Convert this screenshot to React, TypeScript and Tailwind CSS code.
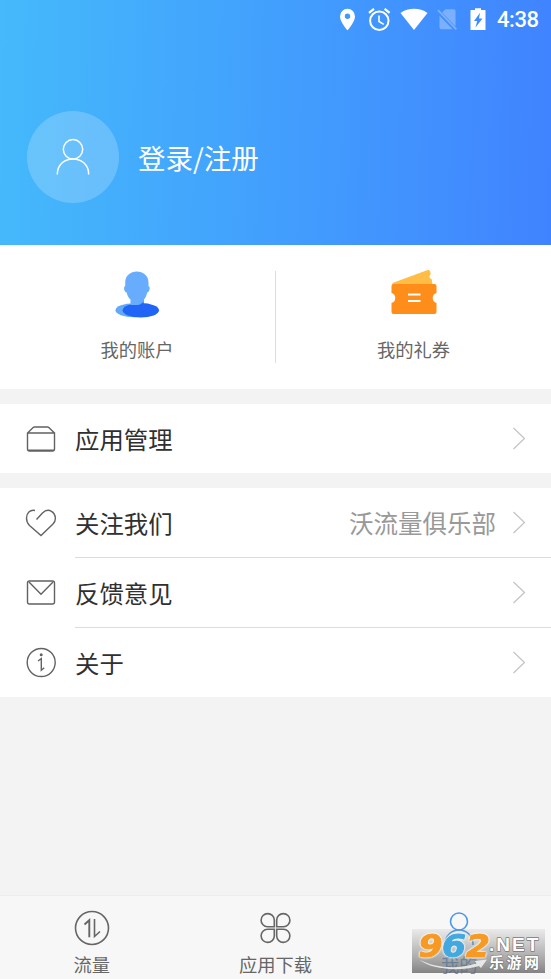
import type { ReactNode } from "react";

function StatusBar() {
  return (
    <div className="flex h-10 items-center pl-[339px] text-white">
      <svg width="17" height="24" viewBox="0 0 17 24" fill="currentColor">
        <path fillRule="evenodd" d="M8.5 .8a7.500 7.500 0 0 0-7.500 7.600C1 14 8.500 22.300 8.500 22.300S16 14 16 8.400A7.500 7.500 0 0 0 8.500.8zm0 4.800a2.700 2.700 0 1 1 0 5.400 2.700 2.700 0 0 1 0-5.400z" />
      </svg>
      <svg className="ml-3" width="23" height="24" viewBox="0 0 23 24" fill="none" stroke="currentColor" strokeWidth="2">
        <circle cx="11.300" cy="12.700" r="9.200" />
        <path d="M11 7.500v6l4.800 2.900" strokeWidth="1.600" />
        <path d="M1 4.900 6 .8M16.600.8l5 4.100" strokeWidth="2.200" />
      </svg>
      <svg className="ml-[9px]" width="28" height="24" viewBox="0 0 28 24" fill="currentColor">
        <path d="M14 22 .5 5C4.500 2.200 9 .8 14 .8s9.500 1.400 13.500 4.200z" />
      </svg>
      <svg className="ml-[9px] opacity-30" width="21" height="24" viewBox="0 0 21 24" fill="currentColor">
        <path d="M8.500 1.300h8.300q1.700 0 1.700 1.700v15.400L5.200 4.600zM2.500 7.800 15.700 21.300H4.200q-1.700 0-1.700-1.700z" />
        <path d="M.3 2.800 1.700 1.500 20 20.800l-1.300 1.300z" />
      </svg>
      <svg className="ml-3" width="16" height="24" viewBox="0 0 16 24" fill="currentColor">
        <path fillRule="evenodd" d="M5 .3h6v1.800h4q.5 0 .5.500V22H.5V2.600q0-.5.500-.5h4zm5 4.500L4 13h3.200l-1.700 6.500 7-9H9z" />
      </svg>
      <span className="ml-[11px] font-['Roboto',sans-serif] text-[22px] leading-none font-medium tracking-[-0.4px]">4:38</span>
    </div>
  );
}

function Chevron() {
  return (
    <svg className="mr-[25px] shrink-0" width="14" height="24" viewBox="0 0 14 24" fill="none" stroke="#c3c3c3" strokeWidth="1.200">
      <path d="m1.500 1 11 10.500-11 10.500" />
    </svg>
  );
}

function Row({ icon, label, note }: { icon: ReactNode; label: string; note?: string }) {
  return (
    <div className="flex h-[69px] items-center bg-white">
      <svg className="ml-[25px] shrink-0" width="32" height="32" viewBox="0 0 32 32" fill="none" stroke="#626262" strokeWidth="1.400">
        {icon}
      </svg>
      <span className="mt-[2px] ml-[18px] text-[24.400px] leading-none text-[#303030]">{label}</span>
      <span className="mt-[2px] mr-4 ml-auto text-[24.500px] leading-none text-[#999]">{note}</span>
      <Chevron />
    </div>
  );
}

function Tab({ icon, label, active = false }: { icon: ReactNode; label: string; active?: boolean }) {
  return (
    <div className={active ? "flex flex-1 flex-col items-center text-[#4c99e8]" : "flex flex-1 flex-col items-center text-[#666]"}>
      <svg className="mt-[14px]" width="36" height="36" viewBox="0 0 36 36" fill="none" stroke="currentColor" strokeWidth="1.600">
        {icon}
      </svg>
      <span className="mt-[9px] text-[18.300px] leading-none">{label}</span>
    </div>
  );
}

function Watermark() {
  return (
    <svg className="absolute top-[929px] left-[412px]" width="134" height="44" viewBox="0 0 134 44">
      <defs>
        <linearGradient id="plate" x1="0" y1="0" x2="0" y2="1">
          <stop offset="0" stopColor="#8b8b8b" stopOpacity="0.120" />
          <stop offset="0.400" stopColor="#858585" stopOpacity="0.450" />
          <stop offset="1" stopColor="#6a6a6a" stopOpacity="0.820" />
        </linearGradient>
      </defs>
      <rect width="133" height="44" fill="url(#plate)" />
      <path d="M7 30.500c16 8.500 38 10 57.500 4l-2-2.500 12.500-1.500L69 39l-2-2C46 43 20 40.500 7 30.500z" fill="#f5f5f5" fillOpacity="0.850" />
      <g className="[filter:drop-shadow(0_0_1px_#fff)_drop-shadow(0_0_0.5px_#fff)]" fontFamily="DejaVu Sans, sans-serif" fontWeight="700" fontStyle="italic" fontSize="32" strokeWidth="1" strokeLinejoin="round">
        <text x="6.500" y="27.500" textLength="24" lengthAdjust="spacingAndGlyphs" fill="#f69a25" stroke="#f69a25">9</text>
        <text x="30" y="27.500" textLength="24" lengthAdjust="spacingAndGlyphs" fill="#43a8df" stroke="#43a8df">6</text>
        <text x="54" y="27.500" textLength="24" lengthAdjust="spacingAndGlyphs" fill="#f69a25" stroke="#f69a25">2</text>
      </g>
      <g fontWeight="700" fill="#fff" stroke="#777" paintOrder="stroke" strokeLinejoin="round">
        <text x="77" y="22" fontFamily="Liberation Sans, Arial, sans-serif" fontSize="19" letterSpacing="2" strokeWidth="1.400">.NET</text>
        <text x="77" y="38.500" fontFamily="Noto Sans CJK SC, sans-serif" fontSize="15" letterSpacing="2.500" strokeWidth="1.200">乐游网</text>
      </g>
    </svg>
  );
}

export default function App() {
  return (
    <main className="relative flex h-[979px] w-[551px] flex-col overflow-hidden bg-[#f3f3f3] font-['Noto_Sans_CJK_SC',sans-serif]">
      <header className="h-[245px] shrink-0 bg-[linear-gradient(92deg,#45b9fb_0%,#429ffd_50%,#4083ff_100%)]">
        <StatusBar />
        <div className="mt-[71px] ml-[27px] flex items-center">
          <div className="flex size-[92px] items-center justify-center rounded-full bg-white/20">
            <svg width="36" height="40" viewBox="0 0 36 40" fill="none" stroke="#fff" strokeWidth="1.500">
              <circle cx="18" cy="12.300" r="9.700" />
              <path d="M2.300 37.500C2.300 16.700 33.700 16.700 33.700 37.500" />
            </svg>
          </div>
          <span className="mt-[2px] ml-[19px] text-[27.500px] leading-none text-white">登录/注册</span>
        </div>
      </header>

      <section className="flex h-[144px] shrink-0 bg-white text-[18.300px] text-[#666]">
        <div className="flex w-[274px] flex-col items-center">
          <svg className="mt-[25px]" width="46" height="50" viewBox="0 0 46 50">
            <ellipse cx="20" cy="40.300" rx="18.500" ry="7" fill="#63a9fa" />
            <ellipse cx="26.800" cy="40.300" rx="18.200" ry="7.200" fill="#2165f7" />
            <path d="M20 27h9.700v10H20z" fill="#2165f7" />
            <path d="M11.200 12.500C11.200 5.500 16.500 1.500 22.800 1.500S34.500 5.500 34.500 12.500v3.800c2.200.2 1.200 6-1.300 6.300-.6 3.500-2 5.500-3.200 7-.5 3.500-3.500 5.500-8 5.500l-5.500-.1v-5.400c-2-1.500-3.200-4-3.800-7-2.500-.3-3.700-6.100-1.500-6.300z" fill="#68adfd" />
          </svg>
          <span className="mt-5 leading-none">我的账户</span>
        </div>
        <div className="mt-[26px] ml-px h-[92px] w-px bg-[#dedede]" />
        <div className="flex w-[275px] flex-col items-center">
          <svg className="mt-[24px]" width="46" height="50" viewBox="0 0 46 50">
            <path d="M1.500 14 36 1.200c2-.7 3 .1 3.400 2l.3 2c-2 2-1.500 4 1 5l.8 6H1.500z" fill="#ffbd45" />
            <path d="M2.500 15h41q2 0 2 2v7a5.200 5.200 0 0 0 0 10v9q0 2-2 2h-41q-2 0-2-2v-9a5.200 5.200 0 0 0 0-10v-7q0-2 2-2z" fill="#ff8d1a" />
            <path d="M17 25.500h12.500M17 32h12.500" stroke="#fff" strokeWidth="2.200" />
          </svg>
          <span className="mt-[21px] leading-none">我的礼券</span>
        </div>
      </section>

      <section className="mt-[15px] shrink-0">
        <Row label="应用管理" icon={
          <path d="M2.500 10h27v16q0 2-2 2h-23q-2 0-2-2V10l5.700-5.500q.5-.5 1.200-.5h13.200q.7 0 1.200.5l5.700 5.500M3 27.300h26" />
        } />
      </section>

      <section className="mt-[15px] shrink-0 bg-white">
        <Row label="关注我们" note="沃流量俱乐部" icon={
          <path d="M10 3.500C5 2.500 1.500 6 1.500 11c0 3 1 5.500 3 7.500L16 28.500l12-11.500c4-4 2.500-10.500-1.500-12.700-4-2.300-7-.3-9 1.700l-6 6.500" />
        } />
        <div className="ml-[75px] h-px bg-[#dcdcdc]" />
        <Row label="反馈意见" icon={<>
          <rect x="2.500" y="4" width="27" height="23" rx="2" />
          <path d="m4 5 12 12.300L28 5" />
        </>} />
        <div className="ml-[75px] h-px bg-[#dcdcdc]" />
        <Row label="关于" icon={<>
          <circle cx="16.200" cy="15.500" r="14" />
          <circle cx="16.200" cy="7.800" r="1.500" fill="#626262" stroke="none" />
          <path d="m13 14 3.300-2.300v11.500l2.900-2.400" />
        </>} />
      </section>

      <nav className="mt-auto flex h-[84px] shrink-0 border-t border-[#ededed] bg-[#f7f7f7]">
        <Tab label="流量" icon={<>
          <circle cx="18" cy="18" r="16.500" />
          <path d="m10.500 14.500 4.800-4.300v17" strokeWidth="1.900" />
          <path d="M20.500 9v17.500l5.500-5" />
        </>} />
        <Tab label="应用下载" icon={
          <path d="M16.300 16.800H9.500A6.600 6.600 0 1 1 16.300 10zM18.700 16.800H25.500A6.600 6.600 0 1 0 18.700 10zM16.300 19.200H9.500A6.600 6.600 0 1 0 16.300 26zM18.700 19.200H25.500A6.600 6.600 0 1 1 18.700 26z" />
        } />
        <Tab active label="我的" icon={<>
          <circle cx="18" cy="11.500" r="8.500" />
          <path d="M4 35c0-20 28-20 28 0" />
        </>} />
      </nav>
      <Watermark />
    </main>
  );
}
